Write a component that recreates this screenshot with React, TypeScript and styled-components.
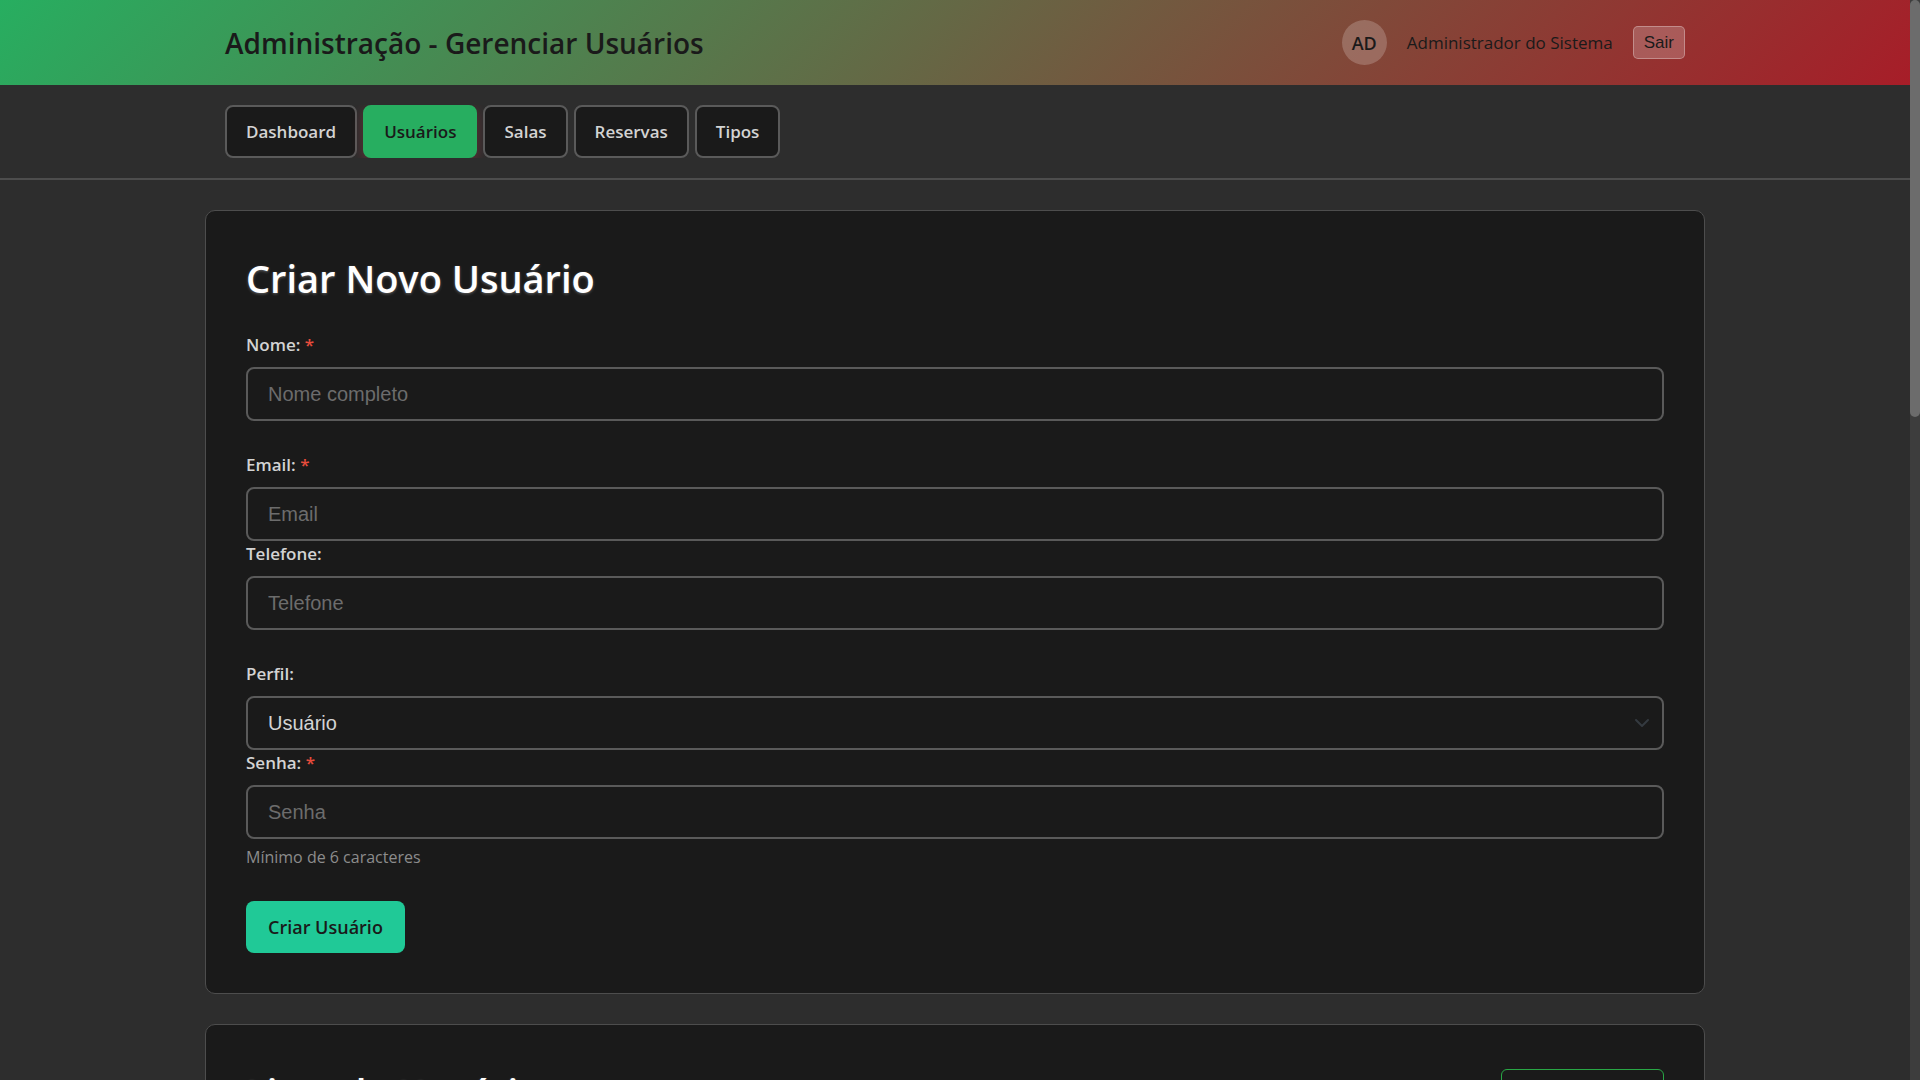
import React from "react";
import styled, { createGlobalStyle, css } from "styled-components";

const sans = `"Segoe UI", "Open Sans", "Noto Sans", sans-serif`;
const controlFont = `"Liberation Sans", Arial, sans-serif`;

const GlobalStyle = createGlobalStyle`
  *, *::before, *::after { box-sizing: border-box; }
  body {
    margin: 0;
    background: #2d2d2d;
    color: #d3d3d3;
    font-family: ${sans};
    font-size: 16px;
  }
`;

const Shell = styled.div`
  display: grid;
  grid-template-columns: minmax(0, 1fr) 10px;
  height: 100vh;
  overflow: hidden;
`;

const Page = styled.div`
  min-height: 0;
  overflow: hidden;
`;

const ScrollTrack = styled.div`
  background: #3d3d3d;
`;

const ScrollThumb = styled.div`
  height: 417px;
  border-radius: 5px;
  background: #6c6c6c;
`;

const Container = styled.div`
  max-width: 1500px;
  margin: 0 auto;
  padding: 0 20px;
`;

const TopBar = styled.header`
  padding: 20px 0;
  background: linear-gradient(135deg, #27ae60 0%, #a71d28 100%);
  color: #1a1a1a;
`;

const TopBarRow = styled(Container)`
  display: flex;
  align-items: center;
  justify-content: space-between;
`;

const AppTitle = styled.h1`
  margin: 0;
  font-size: 28px;
  font-weight: 600;
  line-height: 44px;
`;

const UserInfo = styled.div`
  display: flex;
  align-items: center;
  gap: 20px;
`;

const Avatar = styled.div`
  display: grid;
  place-items: center;
  width: 45px;
  height: 45px;
  border-radius: 50%;
  background: rgba(255, 255, 255, 0.2);
  font-size: 18px;
  font-weight: 600;
`;

const UserName = styled.span`
  font-size: 17px;
`;

const LogoutButton = styled.button`
  height: 33px;
  padding: 0 10px;
  border: 1px solid rgba(255, 255, 255, 0.3);
  border-radius: 5px;
  background: rgba(255, 255, 255, 0.2);
  color: #1a1a1a;
  font-family: ${controlFont};
  font-size: 17px;
  line-height: 20px;
`;

const NavBar = styled.nav`
  padding: 20px 0;
  border-bottom: 2px solid #4d4d4d;
`;

const NavRow = styled(Container)`
  display: flex;
  gap: 6px;
  overflow: hidden;
`;

const NavLink = styled.a<{ $active?: boolean }>`
  padding: 12px 19px;
  border: 2px solid #5a5a5a;
  border-radius: 8px;
  background: #1a1a1a;
  color: #d3d3d3;
  font-size: 17px;
  font-weight: 600;
  line-height: 25px;
  text-decoration: none;
  ${(p) =>
    p.$active &&
    css`
      border-color: #27ae60;
      background: #27ae60;
      color: #1a1a1a;
      box-shadow: 0 4px 12px rgba(220, 53, 69, 0.3);
    `}
`;

const Main = styled.main`
  display: grid;
  gap: 30px;
  max-width: 1500px;
  margin: 0 auto;
  padding: 30px 0;
`;

const Card = styled.section`
  padding: 40px;
  border: 1px solid #4d4d4d;
  border-radius: 10px;
  background: #1a1a1a;
`;

const CardHeader = styled.div`
  display: flex;
  align-items: flex-start;
  justify-content: space-between;
  margin-bottom: 27px;
`;

const CardTitle = styled.h2`
  margin: 0;
  color: #ffffff;
  font-size: 38px;
  font-weight: 600;
  line-height: 54px;
  text-shadow: 0 1px 3px rgba(255, 255, 255, 0.3);
`;

const FieldRow = styled.div`
  margin-bottom: 31px;
`;

const Label = styled.label`
  display: block;
  margin-bottom: 10px;
  color: #d3d3d3;
  font-size: 17px;
  font-weight: 600;
  line-height: 25px;
`;

const Required = styled.span`
  color: #e74c3c;
`;

const control = css`
  display: block;
  width: 100%;
  height: 54px;
  padding: 0 20px;
  border: 2px solid #5a5a5a;
  border-radius: 8px;
  background-color: #1a1a1a;
  color: #d3d3d3;
  font-family: ${controlFont};
  font-size: 20px;
`;

const Input = styled.input`
  ${control}
  &::placeholder {
    color: #6c6c6c;
    opacity: 1;
  }
`;

const Select = styled.select`
  ${control}
  appearance: none;
  background-image: url("data:image/svg+xml,%3Csvg xmlns='http://www.w3.org/2000/svg' viewBox='0 0 16 16'%3E%3Cpath fill='none' stroke='%23343a40' stroke-linecap='round' stroke-linejoin='round' stroke-width='2' d='m2 5 6 6 6-6'/%3E%3C/svg%3E");
  background-repeat: no-repeat;
  background-position: right 12px center;
  background-size: 16px;
`;

const Hint = styled.small`
  display: block;
  margin-top: 5px;
  color: #8c8c8c;
  font-size: 16px;
  line-height: 26px;
`;

const SubmitButton = styled.button`
  height: 52px;
  padding: 0 22px;
  border: 0;
  border-radius: 8px;
  background: #20c997;
  color: #1a1a1a;
  font-family: ${sans};
  font-size: 18px;
  font-weight: 600;
`;

const OutlineButton = styled.button`
  width: 163px;
  height: 48px;
  margin-top: 4px;
  border: 1px solid #28a745;
  border-radius: 6px;
  background: transparent;
  color: #28a745;
  font-family: ${sans};
  font-size: 17px;
`;

const navItems = ["Dashboard", "Usuários", "Salas", "Reservas", "Tipos"];

type FieldProps = {
  id: string;
  label: string;
  required?: boolean;
  children: React.ReactNode;
};

function Field({ id, label, required, children }: FieldProps) {
  return (
    <div>
      <Label htmlFor={id}>
        {label}: {required && <Required>*</Required>}
      </Label>
      {children}
    </div>
  );
}

export default function App() {
  return (
    <>
      <GlobalStyle />
      <Shell>
        <Page>
          <TopBar>
            <TopBarRow>
              <AppTitle>Administração - Gerenciar Usuários</AppTitle>
              <UserInfo>
                <Avatar>AD</Avatar>
                <UserName>Administrador do Sistema</UserName>
                <LogoutButton type="button">Sair</LogoutButton>
              </UserInfo>
            </TopBarRow>
          </TopBar>
          <NavBar>
            <NavRow>
              {navItems.map((item) => (
                <NavLink key={item} href="#" $active={item === "Usuários"}>
                  {item}
                </NavLink>
              ))}
            </NavRow>
          </NavBar>
          <Main>
            <Card>
              <CardHeader>
                <CardTitle>Criar Novo Usuário</CardTitle>
              </CardHeader>
              <form onSubmit={(e) => e.preventDefault()}>
                <FieldRow>
                  <Field id="nome" label="Nome" required>
                    <Input id="nome" type="text" placeholder="Nome completo" />
                  </Field>
                </FieldRow>
                <FieldRow>
                  <Field id="email" label="Email" required>
                    <Input id="email" type="email" placeholder="Email" />
                  </Field>
                  <Field id="telefone" label="Telefone">
                    <Input id="telefone" type="tel" placeholder="Telefone" />
                  </Field>
                </FieldRow>
                <FieldRow>
                  <Field id="perfil" label="Perfil">
                    <Select id="perfil" defaultValue="usuario">
                      <option value="usuario">Usuário</option>
                      <option value="admin">Administrador</option>
                    </Select>
                  </Field>
                  <Field id="senha" label="Senha" required>
                    <Input id="senha" type="password" placeholder="Senha" />
                    <Hint>Mínimo de 6 caracteres</Hint>
                  </Field>
                </FieldRow>
                <SubmitButton type="submit">Criar Usuário</SubmitButton>
              </form>
            </Card>
            <Card>
              <CardHeader>
                <CardTitle>Lista de Usuários</CardTitle>
                <OutlineButton type="button" aria-label="Atualizar lista" />
              </CardHeader>
            </Card>
          </Main>
        </Page>
        <ScrollTrack>
          <ScrollThumb />
        </ScrollTrack>
      </Shell>
    </>
  );
}
